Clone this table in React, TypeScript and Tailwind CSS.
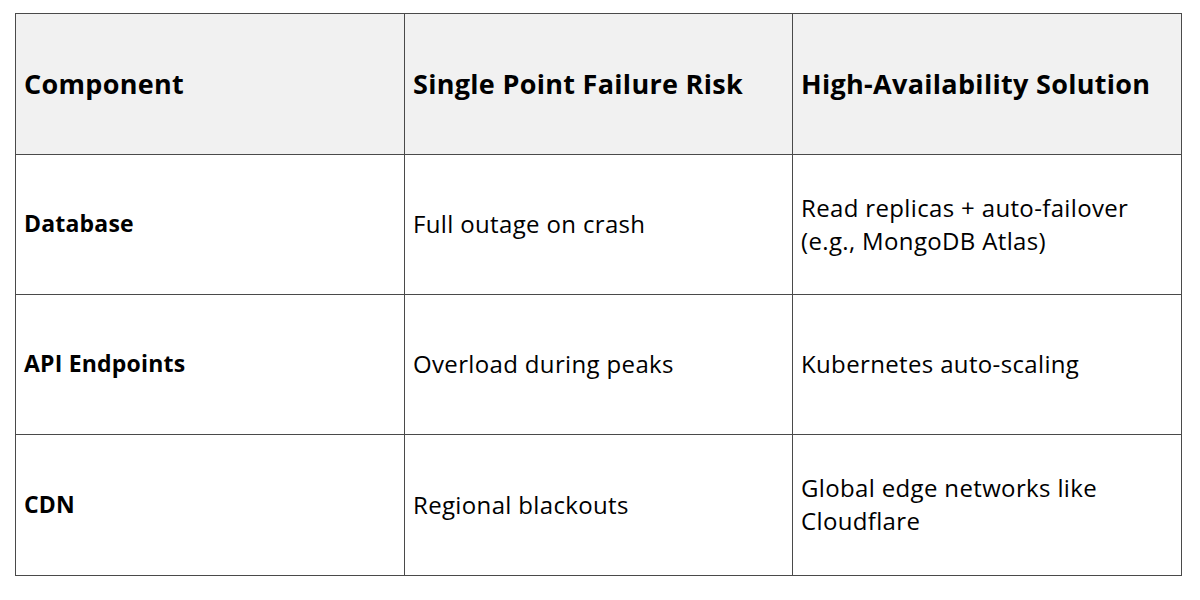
export default function App() {
  const rows = [
    ["Database", "Full outage on crash", "Read replicas + auto-failover (e.g., MongoDB Atlas)"],
    ["API Endpoints", "Overload during peaks", "Kubernetes auto-scaling"],
    ["CDN", "Regional blackouts", "Global edge networks like Cloudflare"],
  ];
  return (
    <div className="w-[1200px] h-[600px] bg-white pt-[13px] pl-[15px]" style={{ fontFamily: '"Open Sans", sans-serif' }}>
      <div className="w-[1167px] border border-[#4a4a4a]">
        <div className="grid grid-cols-[389px_388px_388px] h-[141px] bg-[#f1f1f1] border-b border-[#4a4a4a]">
          {["Component", "Single Point Failure Risk", "High-Availability Solution"].map((h, i) => (
            <div key={i} className={`flex items-center pl-[8px] pr-[4px] text-[27px] tracking-[0.3px] font-bold text-black ${i < 2 ? "border-r border-[#4a4a4a]" : ""}`}>
              {h}
            </div>
          ))}
        </div>
        {rows.map((r, ri) => (
          <div key={ri} className={`grid grid-cols-[389px_388px_388px] h-[140px] ${ri < 2 ? "border-b border-[#4a4a4a]" : ""}`}>
            {r.map((c, i) => (
              <div key={i} className={`flex items-center pl-[8px] pr-[20px] pb-[2px] leading-[33px] text-black ${i === 0 ? "font-bold text-[23px] tracking-[0.2px]" : "text-[24px] tracking-[0.35px]"} ${i < 2 ? "border-r border-[#4a4a4a]" : ""}`}>
                {c}
              </div>
            ))}
          </div>
        ))}
      </div>
    </div>
  );
}
